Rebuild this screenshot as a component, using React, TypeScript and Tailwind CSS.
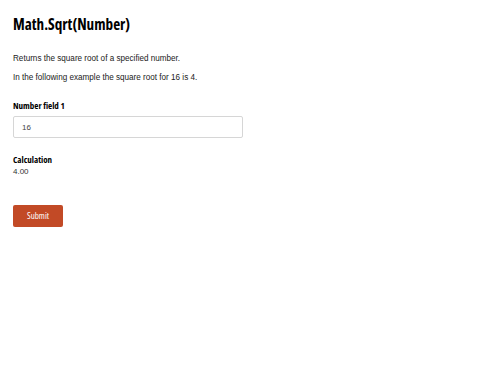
import { useState } from "react";

const condensed = { fontFamily: '"Open Sans", "DejaVu Sans", sans-serif', fontStretch: "75%" } as const;

export default function App() {
  const [value, setValue] = useState("16");
  const n = parseFloat(value);
  const result = isNaN(n) ? "" : Math.sqrt(n).toFixed(2);

  return (
    <div className="min-h-[375px] w-[500px] bg-white px-[13px] pt-[14px] text-black">
      <h1 className="text-[15.2px] font-bold leading-[20px] [font-stretch:75%] [font-family:'Open_Sans',sans-serif]">
        Math.Sqrt(Number)
      </h1>

      <div className="mt-[20px] text-[8.15px] leading-[10px] text-[#222] [font-family:'Liberation_Sans',Arial,sans-serif]">
        <p>Returns the square root of a specified number.</p>
        <p className="mt-[9px]">In the following example the square root for 16 is 4.</p>
      </div>

      <div className="mt-[17px]">
        <label className="block text-[9px] font-bold leading-[11px] [font-stretch:75%] [font-family:'Open_Sans',sans-serif]">
          Number field 1
        </label>
        <input
          value={value}
          onChange={(e) => setValue(e.target.value)}
          className="mt-[5px] block h-[22px] w-[230px] rounded-[2px] border border-[#d6d6d6] px-[8px] text-[8px] text-[#444] outline-none [font-family:'Liberation_Sans',Arial,sans-serif]"
        />
      </div>

      <div className="mt-[16px]">
        <div className="text-[9px] font-bold leading-[11px] [font-stretch:75%] [font-family:'Open_Sans',sans-serif]">
          Calculation
        </div>
        <div className="mt-[2px] text-[8px] leading-[10px] text-[#333] [font-family:'Liberation_Sans',Arial,sans-serif]">
          {result}
        </div>
      </div>

      <button
        style={condensed}
        className="mt-[28px] h-[22px] w-[50px] rounded-[2px] bg-[#c24a26] text-[9px] text-white"
      >
        Submit
      </button>
    </div>
  );
}
